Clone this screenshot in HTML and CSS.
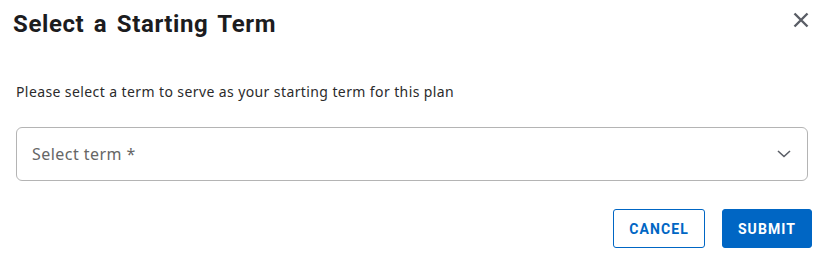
FILE: index.html
```html
<!DOCTYPE html>
<html lang="en">
<head>
<meta charset="utf-8">
<title>Select a Starting Term</title>
<link rel="stylesheet" href="styles.css">
</head>
<body>
<div class="dialog">
  <div class="dialog-header">
    <h2 class="dialog-title">Select a Starting Term</h2>
    <button class="close-btn" aria-label="Close">
      <svg width="16" height="16" viewBox="0 0 16 16"><path d="M1.5 1.5 L14.5 14.5 M14.5 1.5 L1.5 14.5" stroke="#5a5e66" stroke-width="2.4" fill="none"/></svg>
    </button>
  </div>
  <p class="dialog-text">Please select a term to serve as your starting term for this plan</p>
  <div class="select-box">
    <span class="placeholder">Select term *</span>
    <svg class="chevron" width="14" height="8" viewBox="0 0 14 8"><path d="M1 1 L7 6.5 L13 1" stroke="#5a5e66" stroke-width="1.6" fill="none"/></svg>
  </div>
  <div class="dialog-actions">
    <button class="btn btn-outline">CANCEL</button>
    <button class="btn btn-primary">SUBMIT</button>
  </div>
</div>
</body>
</html>
```

FILE: styles.css
```css
html, body {
  margin: 0;
  padding: 0;
  background: #ffffff;
}

.dialog {
  width: 827px;
  height: 260px;
  box-sizing: border-box;
  padding: 10px 15px 0 16px;
  font-family: "Noto Sans", sans-serif;
}

.dialog-header {
  display: flex;
  justify-content: space-between;
  align-items: flex-start;
  height: 28px;
}

.dialog-title {
  margin: 0 0 0 -3px;
  font-family: Roboto, sans-serif;
  font-weight: 700;
  font-size: 24px;
  line-height: 28px;
  letter-spacing: 0.6px;
  word-spacing: 3px;
  color: #1c1c1e;
}

.close-btn {
  border: 0;
  background: none;
  padding: 0;
  margin: 2px 3px 0 0;
  width: 16px;
  height: 16px;
  display: flex;
  cursor: pointer;
}

.dialog-text {
  margin: 44px 0 0 0;
  font-size: 14px;
  line-height: 20px;
  letter-spacing: 0.4px;
  color: #2b2b2b;
}

.select-box {
  margin-top: 25px;
  margin-right: 4px;
  height: 54px;
  box-sizing: border-box;
  border: 1px solid #b4b4b4;
  border-radius: 6px;
  display: flex;
  align-items: center;
  justify-content: space-between;
  padding: 0 16px 0 15px;
}

.placeholder {
  font-size: 16px;
  line-height: 24px;
  color: #666666;
  letter-spacing: 0.45px;
}

.chevron {
  display: block;
}

.dialog-actions {
  display: flex;
  justify-content: flex-end;
  gap: 17px;
  margin-top: 28px;
}

.btn {
  height: 39px;
  box-sizing: border-box;
  border-radius: 3px;
  font-family: Roboto, sans-serif;
  font-weight: 700;
  font-size: 14px;
  letter-spacing: 1.1px;
  padding: 0;
  cursor: pointer;
}

.btn-outline {
  width: 92px;
  background: #ffffff;
  color: #0066c4;
  border: 1px solid #0066c4;
}

.btn-primary {
  width: 90px;
  background: #0066c4;
  color: #ffffff;
  border: 1px solid #0066c4;
}
```
